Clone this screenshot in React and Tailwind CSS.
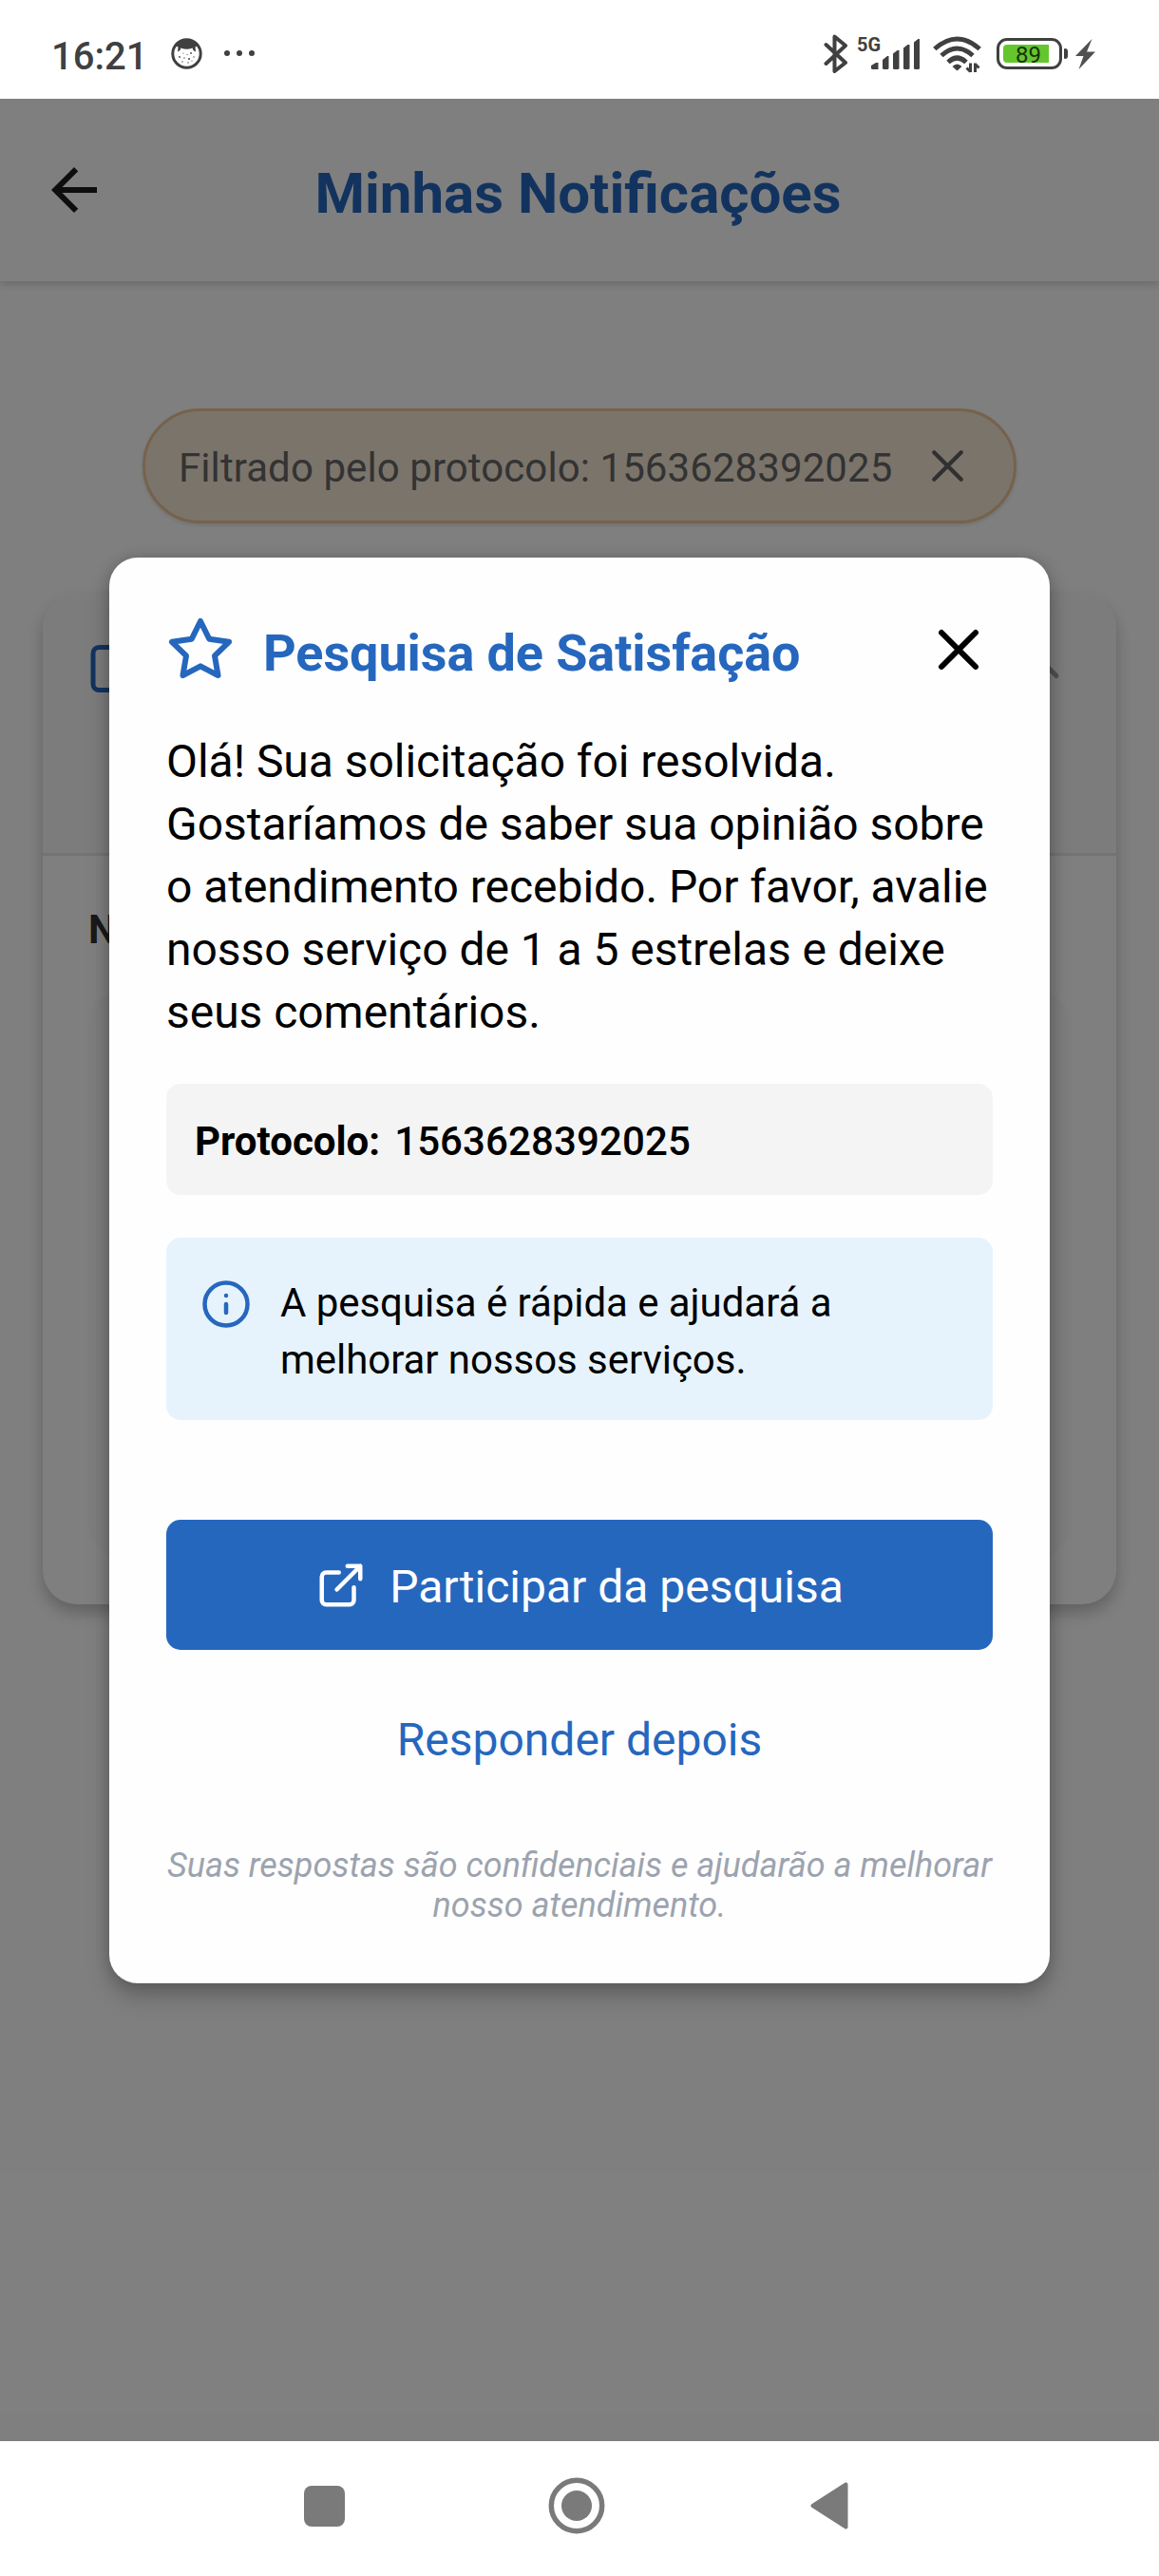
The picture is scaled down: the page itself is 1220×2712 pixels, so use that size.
import React from "react";

function Feather({ className, children, strokeWidth = 2 }) {
  return (
    <svg
      viewBox="0 0 24 24"
      fill="none"
      stroke="currentColor"
      strokeWidth={strokeWidth}
      strokeLinecap="round"
      strokeLinejoin="round"
      className={"block shrink-0 " + className}
    >
      {children}
    </svg>
  );
}

function StatusBar() {
  return (
    <div className="h-[104px] shrink-0 bg-white text-[#404040] flex items-start justify-between pl-[54px] pr-[66px] pt-9">
      <div className="flex">
        <span className="mt-0.5 w-[126px] text-[40px] leading-[43px] font-medium">16:21</span>
        <svg viewBox="0 0 34 42" className="w-[34px] h-[42px] mr-[22px]">
          <circle cx="16.5" cy="20.5" r="14.7" fill="#fff" stroke="#404040" strokeWidth="3" />
          <path d="M4.500 12C8 3 25 3 28.500 12L25.500 13.500l.5 5-2.500-1.500-1-2.500q-6 2.500-12 0l-1 2.500L7 18.500l.5-5z" fill="#404040" />
          <g fill="#404040">
            <circle cx="9" cy="24" r=".9" /><circle cx="13" cy="20" r=".6" /><circle cx="14" cy="25" r=".7" />
            <circle cx="19" cy="26" r="1" /><circle cx="21" cy="20" r=".9" /><circle cx="24" cy="24" r=".7" />
            <circle cx="12" cy="29" r=".7" /><circle cx="18" cy="30" r=".7" /><circle cx="17" cy="21.500" r=".6" />
            <circle cx="22" cy="28" r=".6" />
          </g>
        </svg>
        <div className="flex gap-[7px] mt-[17px]">
          <i className="size-1.5 rounded-full bg-[#404040]" />
          <i className="size-1.5 rounded-full bg-[#404040]" />
          <i className="size-1.5 rounded-full bg-[#404040]" />
        </div>
      </div>

      <div className="flex">
        <svg viewBox="0 0 26 42" className="w-[26px] h-[42px] mr-[9px]" fill="none" stroke="#404040" strokeWidth="4" strokeLinecap="round" strokeLinejoin="round">
          <path d="M2.500 11L23 30 11.500 39V2.500L23 12 2.500 31" />
        </svg>
        <span className="w-[15px] mt-[1px] text-[20px] leading-[20px] font-bold whitespace-nowrap">5G</span>
        <svg viewBox="0 0 52 38" className="w-[52px] h-[38px] mr-[13px]" fill="#404040">
          <path d="M0 35.500v-2.500l5-3h2.500v7H1.500Q0 37 0 35.500z" />
          <path d="M12 27l5-4h1.500v12.500q0 1.500-1.500 1.500h-3.500q-1.500 0-1.500-1.500z" />
          <path d="M23 20.500l4.500-3.500h2v18.500q0 1.500-1.500 1.500h-3.500q-1.500 0-1.500-1.500z" />
          <path d="M34 14.500l4.500-3.500h2v24.500q0 1.500-1.500 1.500h-3.500q-1.500 0-1.500-1.500z" />
          <path d="M45 8.500l4.500-3.500h1.500v30.500q0 1.500-1.500 1.500h-3q-1.500 0-1.500-1.500z" />
        </svg>
        <svg viewBox="0 0 51 42" className="w-[51px] h-[42px] mr-4" fill="none" stroke="#404040" strokeWidth="5">
          <path d="M1.800 15.500Q25.500-5.500 49.200 15.500M9 22.500Q25.500 7.500 42 22.500M16 29.500Q25.500 20.500 35 29.500" />
          <path d="M20.500 34Q25.500 29 30.500 34L25.500 38.500z" fill="#404040" stroke="none" />
          <path d="M39.500 30.500v9.500M35.500 35.500l4 4M44.500 40v-9.500M44.500 31.500l4 4" strokeWidth="3" />
        </svg>
        <div className="mt-1 w-[69px] h-[33px] rounded-[11px] border-[3.500px] border-[#404040] p-[4px]">
          <div className="flex items-center w-[48px] h-[19px] rounded-l-[4px] bg-[#64c62d] text-[#173208] text-[24px] leading-[19px] pl-[13px] font-normal">
            <span className="pt-[3px]">89</span>
          </div>
        </div>
        <i className="ml-[2px] mt-[15px] w-1 h-[11px] rounded-r-[3px] rounded-l-[1px] bg-[#404040]" />
        <svg viewBox="0 0 22 34" className="ml-2 mt-1 w-[22px] h-[34px]" fill="#505050">
          <path d="M17.500 1L0 19h8.500L3.500 33 21 14.500h-9z" />
        </svg>
      </div>
    </div>
  );
}

function NotificationsPage() {
  return (
    <div className="absolute inset-0 flex flex-col bg-white">
      <header className="h-[192px] shrink-0 flex items-start pt-[60px] px-[42px] shadow-[0_4px_8px_rgba(0,0,0,0.16)]">
        <svg viewBox="0 0 24 24" className="size-[72px]" fill="#1c1c1c">
          <path d="M20 11H7.830l5.590-5.590L12 4l-8 8 8 8 1.410-1.410L7.830 13H20v-2z" />
        </svg>
        <h1 className="flex-1 mr-[75px] pt-px text-center text-[60px] leading-[78px] font-bold text-[#2667be]">Minhas Notificações</h1>
      </header>

      <div className="mx-auto mt-[134px] flex w-[920px] h-[121px] items-center justify-between rounded-full border-[3px] border-[#ecc496] bg-[#f6e8d6] pl-[35px] pr-[41px] shadow-[0_2px_4px_rgba(0,0,0,0.12)]">
        <span className="pt-[4px] text-[42px] leading-[50px] tracking-[0.080px] text-[#666]">Filtrado pelo protocolo: 1563628392025</span>
        <Feather className="size-[57px] text-[#606060]" strokeWidth={1.8}>
          <path d="M18 6L6 18M6 6l12 12" />
        </Feather>
      </div>

      <section className="mx-[45px] mt-[74px] h-[1064px] flex flex-col rounded-[36px] bg-white shadow-[0_9px_17px_rgba(0,0,0,0.24)]">
        <div className="h-[276px] shrink-0 flex justify-between rounded-t-[36px] border-b-[3px] border-[#e5e7eb] bg-[#f9f9f9] px-12 pt-[49px]">
          <Feather className="size-[60px] text-[#2667be]">
            <rect x="2" y="3" width="20" height="18" rx="2.500" />
          </Feather>
          <Feather className="size-[60px] text-[#9ca3af]">
            <path d="M18 15l-6-6-6 6" />
          </Feather>
        </div>
        <div className="flex-1 flex flex-col px-12 pb-[49px]">
          <p className="mt-[53px] mb-[39px] text-[42px] leading-[50px] font-bold text-[#333]">N</p>
          <div className="flex-1 rounded-[36px] bg-[#fafafa]" />
        </div>
      </section>
    </div>
  );
}

function SurveyDialog() {
  return (
    <div className="absolute left-[115px] top-[483px] w-[990px] h-[1501px] flex flex-col rounded-[30px] bg-[#fefefe] px-[60px] pt-[61px] text-black shadow-[0_14px_24px_rgba(0,0,0,0.22),0_0_15px_rgba(0,0,0,0.16)]">
      <div className="flex h-[72px]">
        <Feather className="size-[72px] text-[#2667be]">
          <polygon points="12 2 15.09 8.26 22 9.27 17 14.14 18.18 21.02 12 17.77 5.82 21.02 7 14.14 2 9.27 8.910 8.26" />
        </Feather>
        <h2 className="ml-[30px] flex-1 pt-1 text-[54px] leading-[72px] font-bold tracking-[-0.1px] text-[#2667be]">Pesquisa de Satisfação</h2>
        <Feather className="size-[72px]">
          <path d="M18 6L6 18M6 6l12 12" />
        </Feather>
      </div>

      <p className="mt-[49px] text-[48px] leading-[66px] tracking-[-0.040px]">
        Olá! Sua solicitação foi resolvida.<br />
        Gostaríamos de saber sua opinião sobre<br />
        o atendimento recebido. Por favor, avalie<br />
        nosso serviço de 1 a 5 estrelas e deixe<br />
        seus comentários.
      </p>

      <div className="mt-[42px] h-[117px] flex items-center gap-[15px] rounded-[15px] bg-[#f4f4f4] px-[30px] pt-1 text-[42px] leading-[50px]">
        <span className="font-bold">Protocolo:</span>
        <span className="font-medium tracking-[0.120px]">1563628392025</span>
      </div>

      <div className="mt-[45px] h-[192px] flex gap-[30px] rounded-[15px] bg-[#e6f3fc] px-9 pt-[39px]">
        <Feather className="mt-1 size-[54px] text-[#2667be]">
          <circle cx="12" cy="12" r="10" />
          <path d="M12 16v-4M12 8h.01" />
        </Feather>
        <p className="text-[42px] leading-[60px] tracking-[-0.050px]">
          A pesquisa é rápida e ajudará a<br />
          melhorar nossos serviços.
        </p>
      </div>

      <button className="mt-[105px] h-[137px] shrink-0 flex items-center justify-center gap-6 rounded-[15px] bg-[#2667be] text-white">
        <Feather className="size-[54px]">
          <path d="M18 13v6a2 2 0 0 1-2 2H5a2 2 0 0 1-2-2V8a2 2 0 0 1 2-2h6M15 3h6v6M10 14L21 3" />
        </Feather>
        <span className="pt-1 text-[48px] leading-[60px]">Participar da pesquisa</span>
      </button>

      <button className="mt-[60px] h-[70px] text-center text-[48px] leading-[70px] text-[#2667be]">Responder depois</button>

      <p className="mt-[76px] -mx-2 text-center text-[36px] leading-[42px] italic text-[#9ca3af]">
        Suas respostas são confidenciais e ajudarão a melhorar<br />
        nosso atendimento.
      </p>
    </div>
  );
}

function NavigationBar() {
  return (
    <div className="h-[142px] shrink-0 bg-white flex items-center justify-between pl-[320px] pr-[327px] pb-[6px] text-[#7a7a7a]">
      <i className="size-[43px] rounded-[8px] bg-[#7a7a7a]" />
      <svg viewBox="0 0 60 60" className="-ml-0.5 size-[60px]">
        <circle cx="30" cy="30" r="26.7" fill="none" stroke="currentColor" strokeWidth="5.500" />
        <circle cx="30" cy="30" r="16" fill="currentColor" />
      </svg>
      <svg viewBox="0 0 40 50" className="w-[40px] h-[50px]" fill="currentColor" stroke="currentColor" strokeWidth="4" strokeLinejoin="round">
        <path d="M2.500 25L37.500 2.500v45z" />
      </svg>
    </div>
  );
}

export default function App() {
  return (
    <div className="w-[1220px] h-[2712px] flex flex-col overflow-hidden font-['Roboto',sans-serif]">
      <StatusBar />
      <main className="relative flex-1 overflow-hidden">
        <NotificationsPage />
        <div className="absolute inset-0 bg-black/50" />
        <SurveyDialog />
      </main>
      <NavigationBar />
    </div>
  );
}
